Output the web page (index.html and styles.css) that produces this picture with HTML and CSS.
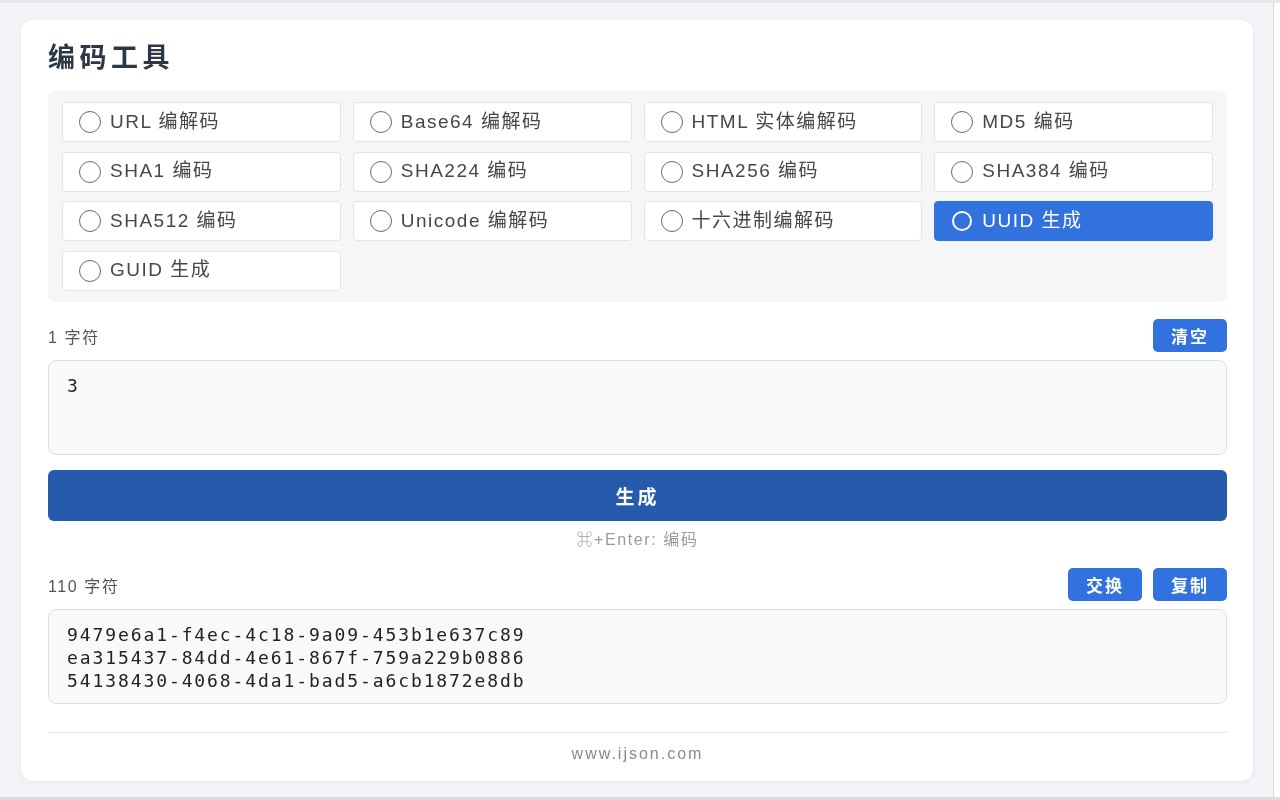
FILE: index.html
```html
<!DOCTYPE html>
<html lang="zh-CN">
<head>
  <meta charset="UTF-8">
  <meta name="viewport" content="width=device-width, initial-scale=1.0">
  <title>编码工具</title>
  <link rel="stylesheet" href="styles.css">
</head>
<body>
  <div class="page">
    <div class="tool-card">
      <h1>编码工具</h1>

      <!-- encoding type selection -->
      <div class="mode-grid">
        <label class="mode"><input type="radio" name="mode" value="url"><span>URL 编解码</span></label>
        <label class="mode"><input type="radio" name="mode" value="base64"><span>Base64 编解码</span></label>
        <label class="mode"><input type="radio" name="mode" value="html"><span>HTML 实体编解码</span></label>
        <label class="mode"><input type="radio" name="mode" value="md5"><span>MD5 编码</span></label>
        <label class="mode"><input type="radio" name="mode" value="sha1"><span>SHA1 编码</span></label>
        <label class="mode"><input type="radio" name="mode" value="sha224"><span>SHA224 编码</span></label>
        <label class="mode"><input type="radio" name="mode" value="sha256"><span>SHA256 编码</span></label>
        <label class="mode"><input type="radio" name="mode" value="sha384"><span>SHA384 编码</span></label>
        <label class="mode"><input type="radio" name="mode" value="sha512"><span>SHA512 编码</span></label>
        <label class="mode"><input type="radio" name="mode" value="unicode"><span>Unicode 编解码</span></label>
        <label class="mode"><input type="radio" name="mode" value="hex"><span>十六进制编解码</span></label>
        <label class="mode active"><input type="radio" name="mode" value="uuid" checked><span>UUID 生成</span></label>
        <label class="mode"><input type="radio" name="mode" value="guid"><span>GUID 生成</span></label>
      </div>

      <!-- input -->
      <div class="field-head">
        <span class="count">1 字符</span>
        <div class="actions">
          <button class="small-btn" type="button">清空</button>
        </div>
      </div>
      <textarea class="text-box" id="input">3</textarea>

      <button class="run-btn" type="button">生成</button>
      <div class="hint">⌘+Enter: 编码</div>

      <!-- output -->
      <div class="field-head">
        <span class="count">110 字符</span>
        <div class="actions">
          <button class="small-btn" type="button">交换</button>
          <button class="small-btn" type="button">复制</button>
        </div>
      </div>
      <textarea class="text-box" id="output" readonly>9479e6a1-f4ec-4c18-9a09-453b1e637c89
ea315437-84dd-4e61-867f-759a229b0886
54138430-4068-4da1-bad5-a6cb1872e8db</textarea>

      <div class="footer">www.ijson.com</div>
    </div>
  </div>
  <div class="side-strip"></div>
</body>
</html>
```

FILE: styles.css
```css
html, body {
  height: 100%;
}

body {
  margin: 0;
  display: flex;
  background-color: #f3f4f7;
  border-top: 3px solid #e7e9ed;
  border-bottom: 3px solid #dcdde0;
  box-sizing: border-box;
  font-family: "Liberation Sans", "Noto Sans CJK SC", sans-serif;
  color: #444;
}

.page {
  flex: 1;
  padding: 17px 20px 0 21px;
}

.side-strip {
  width: 6px;
  background-color: #fff;
  border-left: 1px solid #d6d8dc;
}

.tool-card {
  background-color: #fff;
  border-radius: 12px;
  padding: 24px 26px 18px 27px;
  box-shadow: 0 1px 6px rgba(0, 0, 0, 0.06);
}

h1 {
  margin: 0 0 19px 0;
  font-size: 27px;
  line-height: 28px;
  letter-spacing: 4.5px;
  color: #2c3848;
}

/* radio grid */
.mode-grid {
  display: grid;
  grid-template-columns: repeat(4, 1fr);
  gap: 9.5px 12px;
  padding: 11px 14px 11.5px 14px;
  background-color: #f5f6f8;
  border-radius: 8px;
}

.mode {
  display: flex;
  align-items: center;
  height: 40px;
  box-sizing: border-box;
  padding-left: 16px;
  background-color: #fff;
  border: 1px solid #e1e3e7;
  border-radius: 4px;
  font-size: 19px;
  letter-spacing: 1.5px;
  color: #474747;
  cursor: pointer;
}

.mode span {
  line-height: 1;
  padding-bottom: 2px;
}

.mode input {
  appearance: none;
  -webkit-appearance: none;
  width: 22px;
  height: 22px;
  margin: 0 9px 0 0;
  border: 1.5px solid #6b6b6b;
  border-radius: 50%;
  flex-shrink: 0;
}

.mode.active {
  background-color: #3172de;
  border-color: #3172de;
  color: #fff;
}

.mode.active input {
  width: 20px;
  height: 20px;
  margin-left: 1px;
  margin-right: 10px;
  border: 2.5px solid #fff;
}

/* counter + buttons row */
.field-head {
  display: flex;
  align-items: center;
  justify-content: space-between;
  margin-top: 17px;
  margin-bottom: 8px;
}

.count {
  font-size: 16px;
  letter-spacing: 1.6px;
  color: #555;
}

.actions {
  display: flex;
  gap: 11px;
}

.small-btn {
  height: 33px;
  width: 74px;
  border: none;
  border-radius: 5px;
  background-color: #3172de;
  color: #fff;
  font-family: inherit;
  font-size: 17px;
  font-weight: bold;
  letter-spacing: 2px;
  cursor: pointer;
}

.text-box {
  display: block;
  width: 100%;
  height: 95px;
  box-sizing: border-box;
  padding: 13px 18px;
  background-color: #f8f9fa;
  border: 1.5px solid #dcdcdc;
  border-radius: 8px;
  resize: none;
  outline: none;
  font-family: "DejaVu Sans Mono", monospace;
  font-size: 18px;
  line-height: 23px;
  letter-spacing: 1.9px;
  color: #222;
}

.run-btn {
  display: block;
  width: 100%;
  height: 51px;
  margin-top: 15px;
  border: none;
  border-radius: 6px;
  background-color: #265aad;
  color: #fff;
  font-family: inherit;
  font-size: 19px;
  font-weight: bold;
  letter-spacing: 3px;
  cursor: pointer;
}

.hint {
  margin-top: 10px;
  text-align: center;
  font-size: 16px;
  line-height: 18px;
  letter-spacing: 1.6px;
  color: #9a9a9a;
}

.hint + .field-head {
  margin-top: 19px;
}

.footer {
  margin-top: 28px;
  padding-top: 12px;
  border-top: 1px solid #e3e3e3;
  text-align: center;
  font-size: 16px;
  line-height: 18px;
  letter-spacing: 2px;
  color: #8a8a8a;
}
```
